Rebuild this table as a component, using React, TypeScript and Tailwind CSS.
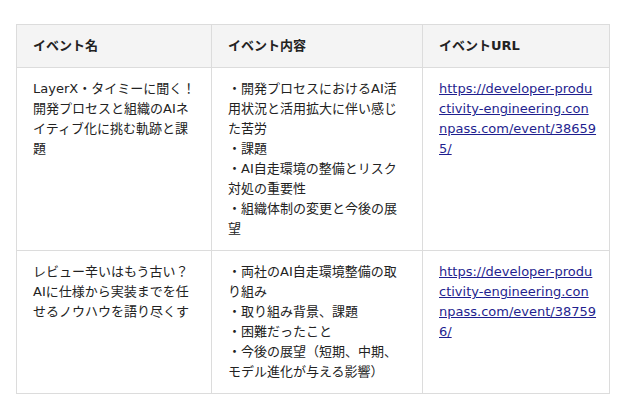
const rows = [
  {
    name: 'LayerX・タイミーに聞く！開発プロセスと組織のAIネイティブ化に挑む軌跡と課題',
    points: [
      '・開発プロセスにおけるAI活用状況と活用拡大に伴い感じた苦労',
      '・課題',
      '・AI自走環境の整備とリスク対処の重要性',
      '・組織体制の変更と今後の展望',
    ],
    url: 'https://developer-productivity-engineering.connpass.com/event/386595/',
  },
  {
    name: 'レビュー辛いはもう古い？AIに仕様から実装までを任せるノウハウを語り尽くす',
    points: [
      '・両社のAI自走環境整備の取り組み',
      '・取り組み背景、課題',
      '・困難だったこと',
      '・今後の展望（短期、中期、モデル進化が与える影響）',
    ],
    url: 'https://developer-productivity-engineering.connpass.com/event/387596/',
  },
]

export default function App() {
  return (
    <div className="min-h-screen bg-white pt-6 pl-4 text-[13px] leading-5 text-[#222] font-['DejaVu_Sans','Noto_Sans_CJK_JP',sans-serif]">
      <div className="grid w-[594px] grid-cols-[195px_211px_187px] border-l border-t border-[#dcdcdc]">
        {['イベント名', 'イベント内容', 'イベントURL'].map(h => (
          <div key={h} className="border-r border-b border-[#dcdcdc] bg-[#f4f4f4] pl-4 pr-3 py-[11px] font-bold">
            {h}
          </div>
        ))}

        {rows.map((r, i) => (
          <div key={i} className="contents">
            <div className="border-r border-b border-[#dcdcdc] pl-4 pr-3 py-[11px]">{r.name}</div>
            <div className="border-r border-b border-[#dcdcdc] px-4 py-[11px]">
              {r.points.map(p => (
                <p key={p}>{p}</p>
              ))}
            </div>
            <div className="border-r border-b border-[#dcdcdc] pl-4 pr-[12.5px] py-[11px] break-all">
              <a href="#" className="text-[#1f1f8f] underline">{r.url}</a>
            </div>
          </div>
        ))}
      </div>
    </div>
  )
}
